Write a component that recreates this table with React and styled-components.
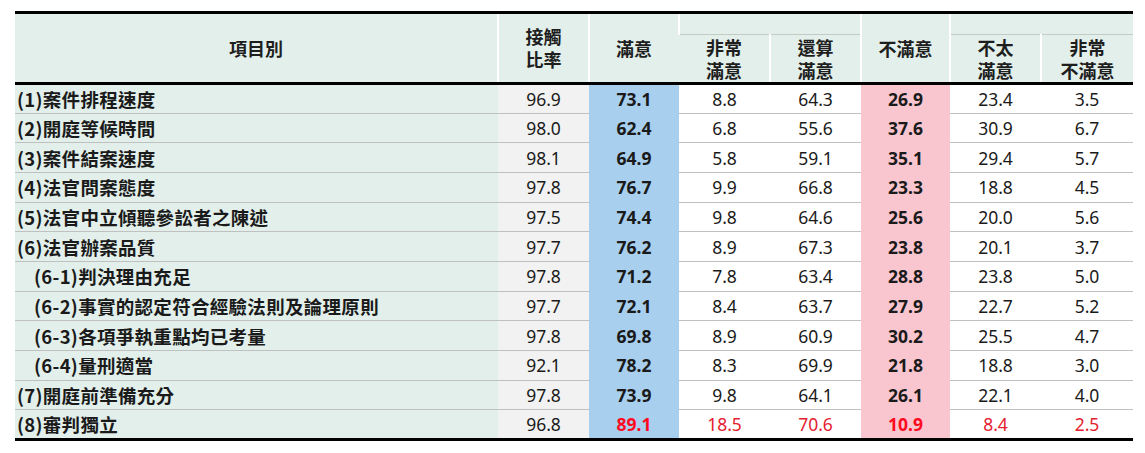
import React from "react";
import styled, {createGlobalStyle} from "styled-components";

const rows = [
    {label: "(1)案件排程速度", rate: "96.9", sat: "73.1", v1: "8.8", v2: "64.3", dis: "26.9", d1: "23.4", d2: "3.5"},
    {label: "(2)開庭等候時間", rate: "98.0", sat: "62.4", v1: "6.8", v2: "55.6", dis: "37.6", d1: "30.9", d2: "6.7"},
    {label: "(3)案件結案速度", rate: "98.1", sat: "64.9", v1: "5.8", v2: "59.1", dis: "35.1", d1: "29.4", d2: "5.7"},
    {label: "(4)法官問案態度", rate: "97.8", sat: "76.7", v1: "9.9", v2: "66.8", dis: "23.3", d1: "18.8", d2: "4.5"},
    {label: "(5)法官中立傾聽參訟者之陳述", rate: "97.5", sat: "74.4", v1: "9.8", v2: "64.6", dis: "25.6", d1: "20.0", d2: "5.6"},
    {label: "(6)法官辦案品質", rate: "97.7", sat: "76.2", v1: "8.9", v2: "67.3", dis: "23.8", d1: "20.1", d2: "3.7"},
    {label: "(6-1)判決理由充足", sub: true, rate: "97.8", sat: "71.2", v1: "7.8", v2: "63.4", dis: "28.8", d1: "23.8", d2: "5.0"},
    {label: "(6-2)事實的認定符合經驗法則及論理原則", sub: true, rate: "97.7", sat: "72.1", v1: "8.4", v2: "63.7", dis: "27.9", d1: "22.7", d2: "5.2"},
    {label: "(6-3)各項爭執重點均已考量", sub: true, rate: "97.8", sat: "69.8", v1: "8.9", v2: "60.9", dis: "30.2", d1: "25.5", d2: "4.7"},
    {label: "(6-4)量刑適當", sub: true, rate: "92.1", sat: "78.2", v1: "8.3", v2: "69.9", dis: "21.8", d1: "18.8", d2: "3.0"},
    {label: "(7)開庭前準備充分", rate: "97.8", sat: "73.9", v1: "9.8", v2: "64.1", dis: "26.1", d1: "22.1", d2: "4.0"},
    {label: "(8)審判獨立", rate: "96.8", sat: "89.1", v1: "18.5", v2: "70.6", dis: "10.9", d1: "8.4", d2: "2.5", alert: true},
];

const colWidths = [483, 91, 90, 91, 91, 89, 91, 92];

const GlobalStyle = createGlobalStyle`
    body {
        margin: 0;
        background: #ffffff;
        font-family: "Noto Sans", "Noto Sans CJK TC", sans-serif;
    }
`;

const Page = styled.div`
    padding: 11px 0 0 15px;
`;

const Table = styled.table`
    width: 1118px;
    border-collapse: collapse;
    table-layout: fixed;
    border-top: 3px solid #000;
    border-bottom: 3px solid #000;
`;

const Head = styled.thead`
    background: #e2efea;
    border-bottom: 3px solid #000;
`;

const Th = styled.th`
    padding: 0;
    font-family: "Noto Sans CJK TC", sans-serif;
    font-size: 18px;
    font-weight: 700;
    line-height: 23px;
    color: #1e1e1e;
    text-align: center;
    vertical-align: middle;
    border-left: 2px solid #ffffff;
    border-bottom: ${p => (p.$group ? "1px solid #c3cbc7" : "none")};
    height: ${p => (p.$group ? "20px" : "auto")};
    &:first-child {
        border-left: none;
    }
`;

const SubTh = styled(Th)`
    height: 44px;
    padding-top: 1px;
`;

const Row = styled.tr`
    height: 29.67px;
`;

const Label = styled.td`
    padding: 0 0 0 ${p => (p.$sub ? "19px" : "2px")};
    background: #e2efea;
    font-family: "Noto Sans CJK TC", sans-serif;
    font-size: 18.5px;
    letter-spacing: 0.3px;
    font-weight: 700;
    color: #1a1a1a;
    white-space: nowrap;
    border-bottom: 1px solid #c0c0c0;
    tr:last-child & {
        border-bottom: none;
    }
`;

const tones = {
    rate: "#f2f2f2",
    sat: "#a8cfee",
    dis: "#f9c6d0",
    plain: "#ffffff",
};

const Num = styled.td`
    padding: 0;
    text-align: center;
    font-family: "Noto Sans", sans-serif;
    font-size: 17.5px;
    font-weight: ${p => (p.$bold ? 700 : 400)};
    color: ${p => (p.$alert ? (p.$bold ? "#ff0a1e" : "#e5212f") : "#1a1a1a")};
    background: ${p => tones[p.$tone]};
    border-bottom: 1px solid ${p => (p.$tone === "sat" || p.$tone === "dis" ? tones[p.$tone] : "#c0c0c0")};
    tr:last-child & {
        border-bottom: none;
    }
`;

function App() {
    return (
        <Page>
            <GlobalStyle/>
            <Table>
                <colgroup>
                    {colWidths.map((w, i) => <col key={i} style={{width: w}}/>)}
                </colgroup>
                <Head>
                    <tr>
                        <Th rowSpan={2}>項目別</Th>
                        <Th rowSpan={2}>接觸<br/>比率</Th>
                        <Th rowSpan={2}>滿意</Th>
                        <Th colSpan={2} $group/>
                        <Th rowSpan={2}>不滿意</Th>
                        <Th colSpan={2} $group/>
                    </tr>
                    <tr>
                        <SubTh>非常<br/>滿意</SubTh>
                        <SubTh>還算<br/>滿意</SubTh>
                        <SubTh>不太<br/>滿意</SubTh>
                        <SubTh>非常<br/>不滿意</SubTh>
                    </tr>
                </Head>
                <tbody>
                    {rows.map((r) => (
                        <Row key={r.label}>
                            <Label $sub={r.sub}>{r.label}</Label>
                            <Num $tone="rate">{r.rate}</Num>
                            <Num $tone="sat" $bold $alert={r.alert}>{r.sat}</Num>
                            <Num $tone="plain" $alert={r.alert}>{r.v1}</Num>
                            <Num $tone="plain" $alert={r.alert}>{r.v2}</Num>
                            <Num $tone="dis" $bold $alert={r.alert}>{r.dis}</Num>
                            <Num $tone="plain" $alert={r.alert}>{r.d1}</Num>
                            <Num $tone="plain" $alert={r.alert}>{r.d2}</Num>
                        </Row>
                    ))}
                </tbody>
            </Table>
        </Page>
    );
}

export default App;
